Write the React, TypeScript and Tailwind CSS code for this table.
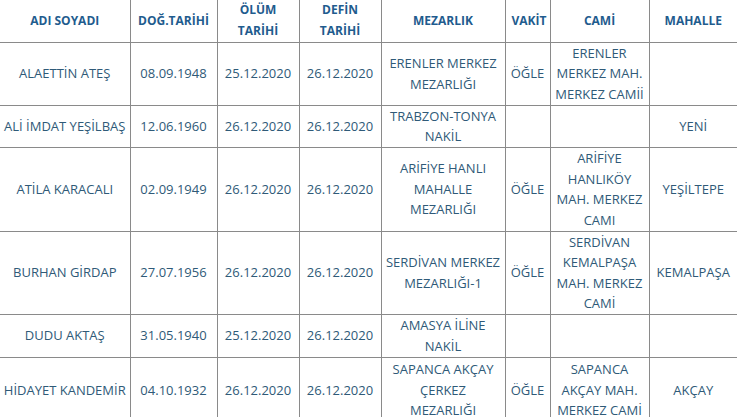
import React from 'react';

type Row = {
  name: string;
  birth: string;
  death: string;
  burial: string;
  cemetery: string;
  time: string;
  mosque: string;
  district: string;
  h: string;
};

const rows: Row[] = [
  { name: 'ALAETTİN ATEŞ', birth: '08.09.1948', death: '25.12.2020', burial: '26.12.2020', cemetery: 'ERENLER MERKEZ MEZARLIĞI', time: 'ÖĞLE', mosque: 'ERENLER MERKEZ MAH. MERKEZ CAMİİ', district: '', h: 'h-[63px]' },
  { name: 'ALİ İMDAT YEŞİLBAŞ', birth: '12.06.1960', death: '26.12.2020', burial: '26.12.2020', cemetery: 'TRABZON-TONYA NAKİL', time: '', mosque: '', district: 'YENİ', h: 'h-[42px]' },
  { name: 'ATİLA KARACALI', birth: '02.09.1949', death: '26.12.2020', burial: '26.12.2020', cemetery: 'ARİFİYE HANLI MAHALLE MEZARLIĞI', time: 'ÖĞLE', mosque: 'ARİFİYE HANLIKÖY MAH. MERKEZ CAMI', district: 'YEŞİLTEPE', h: 'h-[84px]' },
  { name: 'BURHAN GİRDAP', birth: '27.07.1956', death: '26.12.2020', burial: '26.12.2020', cemetery: 'SERDİVAN MERKEZ MEZARLIĞI-1', time: 'ÖĞLE', mosque: 'SERDİVAN KEMALPAŞA MAH. MERKEZ CAMİ', district: 'KEMALPAŞA', h: 'h-[83px]' },
  { name: 'DUDU AKTAŞ', birth: '31.05.1940', death: '25.12.2020', burial: '26.12.2020', cemetery: 'AMASYA İLİNE NAKİL', time: '', mosque: '', district: '', h: 'h-[43px]' },
  { name: 'HİDAYET KANDEMİR', birth: '04.10.1932', death: '26.12.2020', burial: '26.12.2020', cemetery: 'SAPANCA AKÇAY\nÇERKEZ\nMEZARLIĞI', time: 'ÖĞLE', mosque: 'SAPANCA AKÇAY MAH. MERKEZ CAMİ', district: 'AKÇAY', h: 'h-[66px]' },
];

const th = 'border border-[#8a8a8a] px-[6px] py-0 font-bold text-[12px] text-[#1f5c8e] text-center align-middle';
const td = 'border border-[#8a8a8a] px-[3px] py-0 text-center align-middle whitespace-pre-line';

export default function App() {
  return (
    <div lang="tr" className="w-[737px] h-[417px] overflow-hidden bg-white">
      <table
        className="border-collapse table-fixed w-[737px] text-[13px] leading-[20.5px] text-[#2f5a78] uppercase"
        style={{ fontFamily: '"Open Sans", "DejaVu Sans", sans-serif' }}
      >
        <colgroup>
          <col className="w-[130px]" />
          <col className="w-[87px]" />
          <col className="w-[82px]" />
          <col className="w-[82px]" />
          <col className="w-[124px]" />
          <col className="w-[45px]" />
          <col className="w-[99px]" />
          <col className="w-[88px]" />
        </colgroup>
        <thead>
          <tr className="h-[42px]">
            <th className={`${th} border-l-0 border-t-0`}>ADI SOYADI</th>
            <th className={`${th} border-t-0 px-0`}>DOĞ.TARİHİ</th>
            <th className={`${th} border-t-0`}>ÖLÜM TARİHİ</th>
            <th className={`${th} border-t-0`}>DEFİN TARİHİ</th>
            <th className={`${th} border-t-0`}>MEZARLIK</th>
            <th className={`${th} border-t-0 px-0`}>VAKİT</th>
            <th className={`${th} border-t-0`}>CAMİ</th>
            <th className={`${th} border-t-0 border-r-0`}>MAHALLE</th>
          </tr>
        </thead>
        <tbody>
          {rows.map((r) => (
            <tr key={r.name} className={r.h}>
              <td className={`${td} border-l-0 px-px`}>{r.name}</td>
              <td className={td}>{r.birth}</td>
              <td className={td}>{r.death}</td>
              <td className={td}>{r.burial}</td>
              <td className={td}>{r.cemetery}</td>
              <td className={`${td} px-0`}>{r.time}</td>
              <td className={td}>{r.mosque}</td>
              <td className={`${td} border-r-0 px-px`}>{r.district}</td>
            </tr>
          ))}
        </tbody>
      </table>
    </div>
  );
}
